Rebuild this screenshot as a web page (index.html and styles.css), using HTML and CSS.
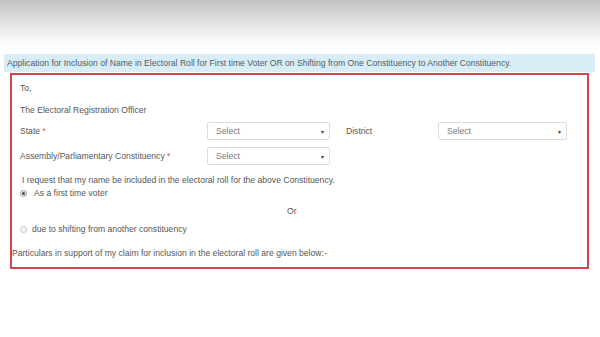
FILE: index.html
```html
<!DOCTYPE html>
<html lang="en">
<head>
    <meta charset="UTF-8">
    <meta name="viewport" content="width=device-width, initial-scale=1.0">
    <title>Form 6 - Inclusion of Name</title>
    <link rel="stylesheet" href="styles.css">
</head>
<body>
    <!-- Top shade -->
    <div class="top-shade"></div>

    <!-- Form title -->
    <div class="form-title">Application for Inclusion of Name in Electoral Roll for First time Voter OR on Shifting from One Constituency to Another Constituency.</div>

    <!-- Form body -->
    <div class="form-box">
        <div class="line to">To,</div>
        <div class="line officer">The Electoral Registration Officer</div>

        <div class="field-row">
            <div class="label">State <span class="req">*</span></div>
            <div class="select-box"><span>Select</span><span class="caret">&#9662;</span></div>
            <div class="label label-district">District</div>
            <div class="select-box select-wide"><span>Select</span><span class="caret">&#9662;</span></div>
        </div>

        <div class="field-row row-second">
            <div class="label">Assembly/Parliamentary Constituency <span class="req">*</span></div>
            <div class="select-box"><span>Select</span><span class="caret">&#9662;</span></div>
        </div>

        <div class="line request">I request that my name be included in the electoral roll for the above Constituency.</div>
        <label class="radio-line first">
            <span class="radio checked"></span>As a first time voter
        </label>
        <div class="line or">Or</div>
        <label class="radio-line second">
            <span class="radio"></span>due to shifting from another constituency
        </label>
        <div class="line particulars">Particulars in support of my claim for inclusion in the electoral roll are given below:-</div>
    </div>
</body>
</html>
```

FILE: styles.css
```css
/* Base */
body, html {
    margin: 0;
    padding: 0;
    background: #fff;
    color: #575757;
    font-family: 'Liberation Sans', Arial, sans-serif;
    font-size: 8.6px;
}

/* Top shade */
.top-shade {
    height: 54px;
    background: linear-gradient(#c2c2c2 0%, #e2e2e2 42%, #fdfdfd 80%, #fff 100%);
}

/* Form title */
.form-title {
    margin: 0 5px 0 4px;
    height: 18px;
    line-height: 18px;
    padding-left: 3px;
    background: #d9edf7;
    color: #4e5d68;
    white-space: nowrap;
    overflow: hidden;
}

/* Form box */
.form-box {
    margin: 1px 11px 0 10px;
    border: 2px solid #d4454b;
    padding: 2px 0 8px 0;
    display: flex;
    flex-direction: column;
}

.line {
    height: 22px;
    line-height: 22px;
    padding-left: 8px;
}

.field-row {
    display: flex;
    align-items: center;
    height: 18px;
    margin-top: 1px;
    padding-left: 8px;
}

.row-second {
    margin-top: 7px;
}

.label {
    width: 187px;
}

.label-district {
    width: 92px;
    margin-left: 16px;
}

.req {
    color: #e0484e;
}

.select-box {
    box-sizing: border-box;
    width: 123px;
    height: 18px;
    border: 1px solid #dcdcdc;
    border-radius: 2px;
    display: flex;
    align-items: center;
    justify-content: space-between;
    padding: 0 5px 0 8px;
    color: #7a7a7a;
    background: #fff;
}

.select-wide {
    width: 129px;
}

.caret {
    font-size: 6px;
    color: #444;
}

.request {
    margin-top: 8px;
    height: 14px;
    line-height: 14px;
    padding-left: 10px;
}

.radio-line {
    display: flex;
    align-items: center;
    height: 12px;
    padding-left: 8px;
}

.radio-line.second {
    margin-top: 6px;
}

.radio {
    box-sizing: border-box;
    width: 7px;
    height: 7px;
    border-radius: 50%;
    border: 1px solid #c8c8c8;
    background: #f2f2f2;
    margin-right: 5px;
    position: relative;
}

.radio-line.first .radio {
    margin-right: 7px;
}

.radio.checked {
    border-color: #999;
}

.radio.checked::after {
    content: '';
    position: absolute;
    left: 1px;
    top: 1px;
    width: 3px;
    height: 3px;
    border-radius: 50%;
    background: #444;
}

.or {
    margin-top: 6px;
    height: 12px;
    line-height: 12px;
    padding-left: 275px;
}

.particulars {
    margin-top: 12px;
    height: 12px;
    line-height: 12px;
    padding-left: 0;
}
```
